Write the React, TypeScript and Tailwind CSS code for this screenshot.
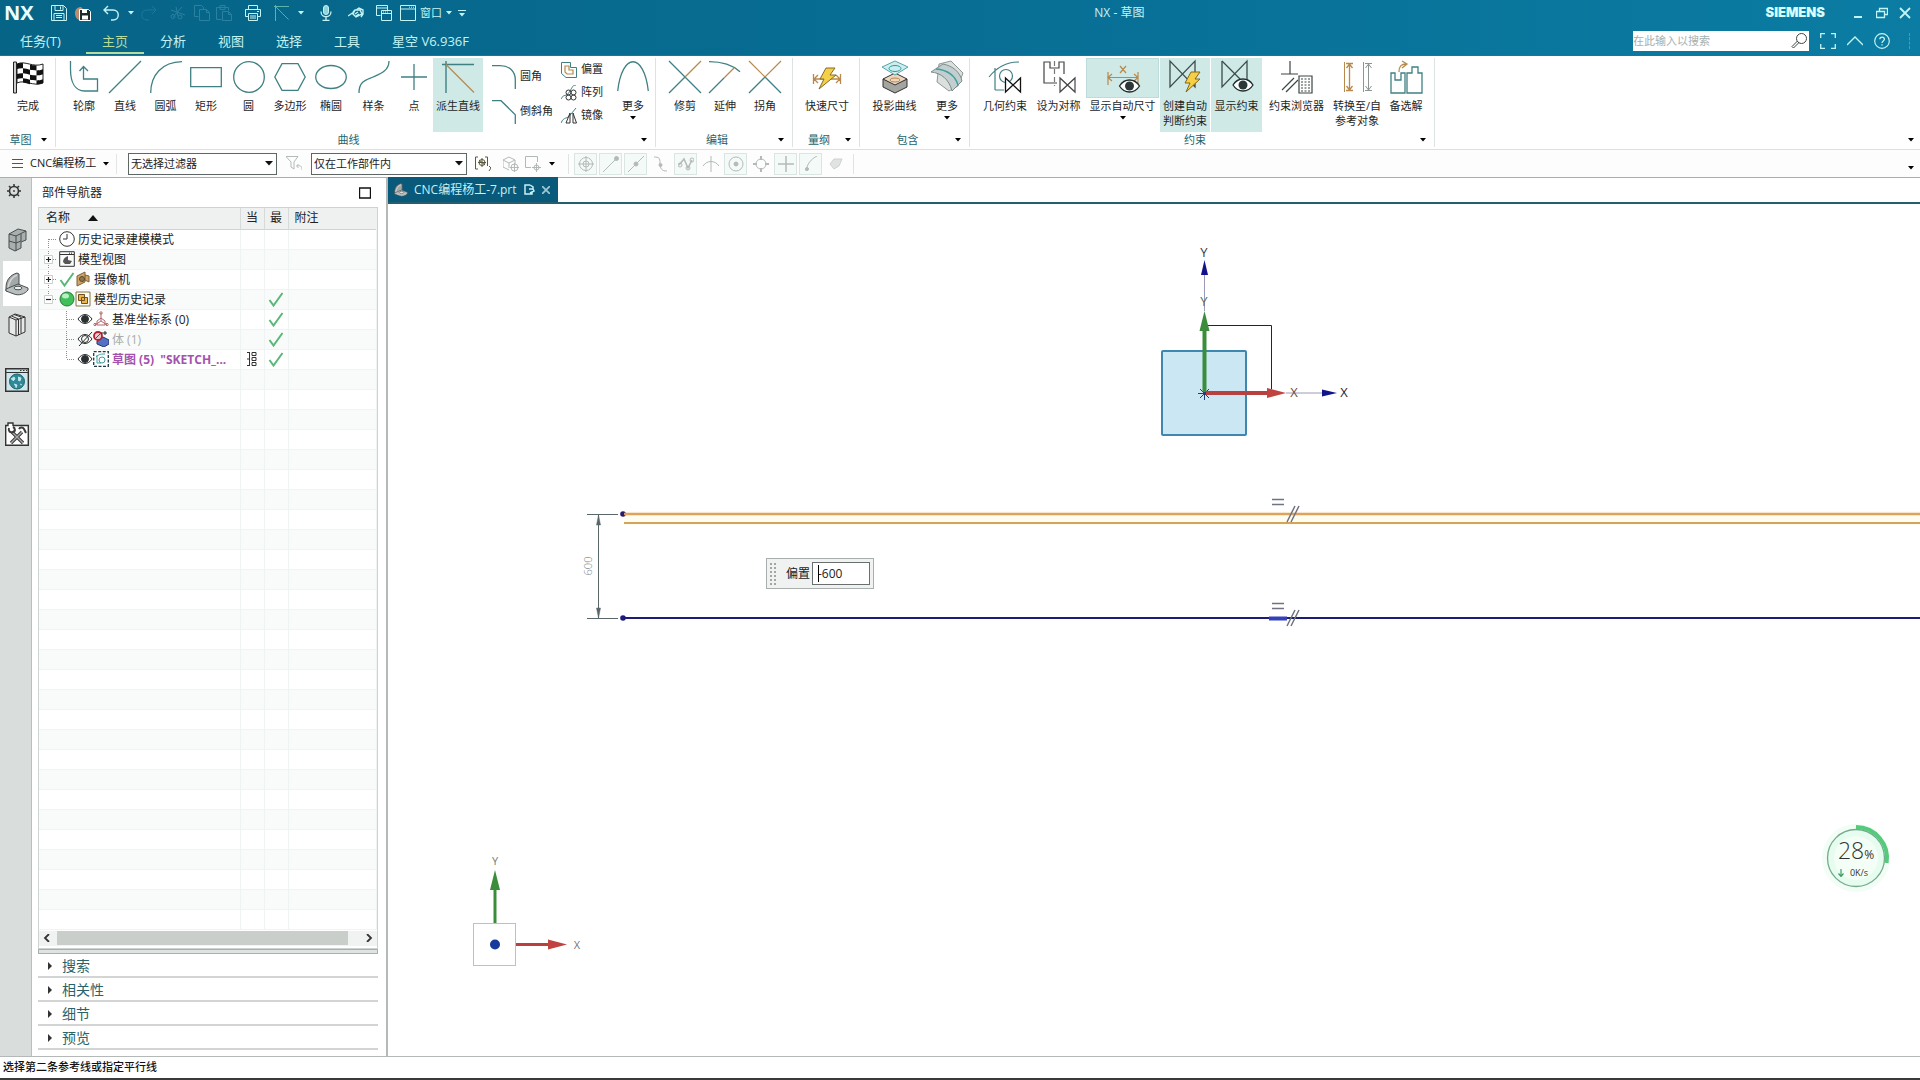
import React from 'react';

type IconProps = {
  children: React.ReactNode;
  className?: string;
  box?: string;
};

// Shared wrapper for every line icon in the app
function Icon({ children, className = 'w-4 h-4', box = '0 0 16 16' }: IconProps) {
  return (
    <svg
      viewBox={box}
      className={`shrink-0 ${className}`}
      fill="none"
      stroke="currentColor"
      strokeWidth="1"
      aria-hidden="true"
    >
      {children}
    </svg>
  );
}

function Caret({ className = 'text-black' }: { className?: string }) {
  return (
    <Icon box="0 0 6 4" className={`w-[6px] h-[4px] ${className}`}>
      <path d="M0 0h6L3 3.6z" fill="currentColor" stroke="none" />
    </Icon>
  );
}

/* ---------- Title bar ---------- */

function QuickButton({ label, className, children }: { label: string; className: string; children: React.ReactNode }) {
  return (
    <button type="button" aria-label={label} className={`flex h-6 items-center justify-center ${className}`}>
      {children}
    </button>
  );
}

function QuickAccess() {
  return (
    <div className="flex items-center text-[#c4f3f3]">
      <span className="w-[47px] pl-1 text-xl leading-6 font-bold text-[#e9ffff]">NX</span>
      <QuickButton label="保存" className="w-6">
        <Icon>
          <path d="M.5.5h12l3 3v12H.5zM4 .5v5h8v-5M9.5 1.5v3M3 15.5v-7h10v7M5 10.5h6M5 12.5h6" />
        </Icon>
      </QuickButton>
      <QuickButton label="全部保存" className="w-6">
        <Icon>
          <path d="M0 8c0-4 3-6 6-6l4 4-5 9c-3 0-5-3-5-7z" fill="#b98d72" stroke="none" />
          <path d="M4.5 4.5h9l2 2v9h-11z" fill="#202a2a" stroke="#fff" />
          <path d="M7 5h5v3H7zM7 10.500h6v4H7z" fill="#fff" stroke="none" />
        </Icon>
      </QuickButton>
      <QuickButton label="撤销" className="w-8">
        <Icon>
          <path d="M5 1 1 5l4 4M1 5h9c7 0 7 10 0 10H8" strokeWidth="1.4" />
        </Icon>
      </QuickButton>
      <QuickButton label="撤销列表" className="w-[7px]">
        <Caret className="text-[#c4f3f3]" />
      </QuickButton>
      <QuickButton label="重做" className="w-[30px] text-[#1f7899]">
        <Icon>
          <path d="m11 1 4 4-4 4M15 5H6c-7 0-7 10 0 10h2" />
        </Icon>
      </QuickButton>
      <QuickButton label="剪切" className="w-7 text-[#2c80a0]">
        <Icon>
          <path d="m1 5 14 5M3 12 12 2M6 2l2 9" />
          <circle cx="3" cy="11.5" r="2" />
          <circle cx="10" cy="12" r="2" />
        </Icon>
      </QuickButton>
      <QuickButton label="复制" className="w-5 text-[#2c80a0]">
        <Icon>
          <path d="M4.5 11.5h-4V.5h7l2 2v2M5.5 4.5h7l3 3v8h-10zM12.5 4.5v3h3" />
        </Icon>
      </QuickButton>
      <QuickButton label="粘贴" className="w-6 text-[#2c80a0]">
        <Icon>
          <path d="M5.5 14.5h-5v-12h12v3M4 .5h5v4H4zM6.5 6.5h6l3 3v6h-9zM12.5 6.5v3h3" />
        </Icon>
      </QuickButton>
      <QuickButton label="打印" className="w-[34px]">
        <Icon>
          <path d="M3.5 4.5v-4h9v4M3.5 11.5h-3v-7h15v7h-3M3.5 8.5h9v7h-9zM5 11h6M5 13h6M12 6.5h2" />
        </Icon>
      </QuickButton>
      <QuickButton label="派生直线" className="w-6 text-[#5cb3a8]">
        <Icon>
          <path d="M0 1.5h15M1.5 0v16" />
          <path d="m1.5 1.5 13 13" stroke="#8d9a78" />
        </Icon>
      </QuickButton>
      <QuickButton label="曲线列表" className="w-[14px]">
        <Caret className="text-[#c4f3f3]" />
      </QuickButton>
      <QuickButton label="语音" className="w-9">
        <Icon>
          <rect x="5.5" y=".5" width="5" height="9" rx="2.5" fill="#8ed3dc" />
          <path d="M3 6.5c0 7 10 7 10 0M8 12v3M4.5 15.5h7" strokeWidth="1.3" />
        </Icon>
      </QuickButton>
      <QuickButton label="触控模式" className="w-6">
        <Icon>
          <path d="m0 11 6-4-1 2 3 3 6-3-2-4H7L5 7M8 5l3-2 4 2v4l-2 3M7 9l3-2M8 11l3-2" strokeWidth="1.4" />
        </Icon>
      </QuickButton>
      <QuickButton label="切换窗口" className="w-8">
        <Icon>
          <path d="M4.5 10.5h-4V.5h11v5M.5 3h11M5.5 5.500h10v10h-10zM5.5 8.500h10" />
          <path d="M7 7h1M9 7h1M11 7h1" />
        </Icon>
      </QuickButton>
      <button type="button" className="flex h-6 items-center gap-1 text-[11px] leading-4">
        <Icon>
          <path d="M.5.5h15v15H.5zM.5 4h15M9 2.2h1M11 2.2h1M13 2.2h1" />
        </Icon>
        窗口
        <Caret className="text-[#c4f3f3]" />
      </button>
      <QuickButton label="工具条选项" className="w-5">
        <Icon box="0 0 8 8" className="w-2 h-2">
          <path d="M0 1.5h8" />
          <path d="M1 4h6L4 7.500z" fill="currentColor" stroke="none" />
        </Icon>
      </QuickButton>
    </div>
  );
}

const menus = ['分析', '视图', '选择', '工具'];

function TitleBar() {
  return (
    <header className="relative border-b border-[#3d6a74] bg-linear-to-r from-[#066487] via-[#086e94] to-[#0b7ca3] text-[#c4f3f3]">
      <div className="flex h-[26px] items-center justify-between">
        <QuickAccess />
        <div className="flex items-center pr-1">
          <span className="mr-[21px] font-['Inter'] text-[13px] font-black text-[#d8fbfb]">SIEMENS</span>
          <button type="button" aria-label="最小化" className="flex w-6 justify-center">
            <Icon className="w-3 h-3" box="0 0 12 12">
              <path d="M2 10h8" strokeWidth="2" />
            </Icon>
          </button>
          <button type="button" aria-label="还原" className="flex w-6 justify-center">
            <Icon className="w-3 h-3" box="0 0 12 12">
              <path d="M3.5 4V1.500h8v6H9M.5 4.500h8v6h-8z" strokeWidth="1.3" />
            </Icon>
          </button>
          <button type="button" aria-label="关闭" className="flex w-[22px] justify-center">
            <Icon className="w-3 h-3" box="0 0 12 12">
              <path d="m1 1 10 10M11 1 1 11" strokeWidth="1.8" />
            </Icon>
          </button>
        </div>
        <h1 className="absolute left-[58.3%] -translate-x-1/2 text-xs text-[#c4f3f3]">NX - 草图</h1>
      </div>
      <div className="flex h-[29px] items-center justify-between">
        <nav className="flex h-7 text-[13px] leading-7">
          <a href="#task" className="w-[86px] pl-5">任务(T)</a>
          <a href="#home" className="h-[27px] w-[58px] border-b-2 border-[#b8dc9c] text-center leading-7 text-[#b8dc9c]">
            主页
          </a>
          {menus.map((m) => (
            <a key={m} href={`#${m}`} className="w-[58px] text-center">
              {m}
            </a>
          ))}
          <a href="#xk" className="pl-4">星空 V6.936F</a>
        </nav>
        <div className="flex items-center gap-[11px] pr-2.5">
          <div className="flex h-5 w-[176px] items-center bg-white pr-0.5">
            <input
              aria-label="搜索"
              placeholder="在此输入以搜索"
              className="min-w-0 flex-1 text-[11px] leading-4 text-gray-700 outline-none placeholder:text-[#a5b0b0]"
            />
            <Icon className="w-4 h-4 text-[#3a4444]">
              <circle cx="10.5" cy="5.5" r="5" />
              <path d="M6.5 8 1 13.500 2.500 15 8 9.500" />
            </Icon>
          </div>
          <button type="button" aria-label="全屏">
            <Icon>
              <path d="M.7 5V.7H5M11 .7h4.300V5M15.300 11v4.300H11M5 15.300H.7V11" strokeWidth="1.3" />
            </Icon>
          </button>
          <button type="button" aria-label="折叠功能区">
            <Icon>
              <path d="m0 12 8-8 8 8" strokeWidth="1.3" />
            </Icon>
          </button>
          <button type="button" aria-label="帮助">
            <Icon>
              <circle cx="8" cy="8" r="7.3" strokeWidth="1.2" />
              <path d="M5.8 6.300c0-3 4.600-3 4.600 0C10.400 8 8 8 8 10M8 11.200v1.300" strokeWidth="1.3" />
            </Icon>
          </button>
          <span className="ml-2 h-4 border-l border-dashed border-[#3fa3c0]" />
        </div>
      </div>
    </header>
  );
}

/* ---------- Ribbon ---------- */

const teal = '#3f8083';
const tan = '#b8894c';

const bolt = 'M9 0h9l-5 7h5L4 20l4-9H3z';

function Eye() {
  return (
    <>
      <path d="M0 7C5-1 15-1 20 7c-5 8-15 8-20 0z" fill="#fff" stroke="#1f2a2a" strokeWidth="1.3" />
      <circle cx="10" cy="7" r="4.5" fill="#2c3838" stroke="none" />
    </>
  );
}

const art: Record<string, React.ReactNode> = {
  finish: (
    <>
      <path d="M1.5 1v31h3V1z" fill="#ccc" stroke="#222" />
      <path d="M5 3c8-4 16 4 26 0v19c-10 4-18-4-26 0z" fill="#fff" stroke="#222" />
      <path
        d="M5 3c2-1 4-1 6-.8v5c-2-.2-4 0-6 .8zM18 3.800c2 .3 4 .6 6.500.6v5c-2.500 0-4.500-.3-6.500-.6zM11 7.200c2 .2 4.500.8 7 1.600v5c-2.500-.8-5-1.400-7-1.600zM24.500 9.400c2 0 4.500-.4 6.500-1.200v5c-2 .8-4.500 1.200-6.500 1.200zM5 13c2-.8 4-1 6-.8v5c-2-.2-4 0-6 .8zM18 13.800c2 .3 4 .6 6.500.6v5c-2.500 0-4.500-.3-6.500-.6zM11 17.200c2 .2 4.500.8 7 1.600v4.500c-2.500-.8-5-1.400-7-1.800zM24.500 19.400c2 0 4.500-.4 6.500-1.200V22c-2 .8-4.500 1.200-6.500 1.400z"
        fill="#111"
        stroke="none"
      />
    </>
  ),
  profile: (
    <g stroke={teal} strokeWidth="1.3">
      <path d="M2.5 0v8c0 14 5 22 14 22h13V18h-14V6M11.500 10l4-4.500 4.500 4.500" />
    </g>
  ),
  line: <path d="M0 32 32 0" stroke={teal} strokeWidth="1.3" />,
  arc: <path d="M.7 32C.7 14 12 1 32 .7" stroke={teal} strokeWidth="1.3" />,
  rect: <path d="M.7 6.700h30.600v19H.7z" stroke={teal} strokeWidth="1.3" />,
  circle: <circle cx="16" cy="16" r="15.3" stroke={teal} strokeWidth="1.3" />,
  polygon: <path d="M.8 16 8 2.700h16L31.200 16 24 29.300H8z" stroke={teal} strokeWidth="1.3" />,
  ellipse: <ellipse cx="16" cy="16" rx="15.3" ry="11.5" stroke={teal} strokeWidth="1.3" />,
  spline: <path d="M1 32c0-12 7-13 14-16S31 10 31 0" stroke={teal} strokeWidth="1.3" />,
  point: <path d="M16 3v26M3 16h26" stroke={teal} strokeWidth="1.3" />,
  derived: (
    <>
      <path d="M0 3.500h32M4 0v32" stroke={teal} strokeWidth="1.4" />
      <path d="m4 3.500 28 28" stroke={tan} strokeWidth="1.2" />
    </>
  ),
  more: <path d="M.7 30C5-9 27-9 31.300 30" stroke={teal} strokeWidth="1.3" />,
  trim: (
    <>
      <path d="m0 0 32 32M0 32l16-16" stroke={teal} strokeWidth="1.3" />
      <path d="M16 16 32 0" stroke={tan} strokeWidth="1.2" />
    </>
  ),
  extend: (
    <>
      <path d="M0 .7c12 0 22 2 31 10M0 32l15-15" stroke={teal} strokeWidth="1.3" />
      <path d="M15 17 25 7" stroke={tan} strokeWidth="1.2" />
    </>
  ),
  corner: (
    <>
      <path d="m0 32 16-16 16 16" stroke={teal} strokeWidth="1.3" />
      <path d="m0 0 16 16L32 0" stroke={tan} strokeWidth="1.2" />
    </>
  ),
  rapid: (
    <>
      <path d="M2.5 13v10M29.500 13v10M3 18h26M7 14l-4 4 4 4M25 14l4 4-4 4" stroke={tan} strokeWidth="1.3" />
      <path d="M15 7h9l-5 7h6L8 28l5-10H9z" fill="#f3cf4a" stroke="#8a6a20" />
    </>
  ),
  project: (
    <>
      <path d="M4 18v8l12 6 12-6v-8l-12 5z" fill="#a3a5a0" stroke="#333" />
      <path d="M4 18 16 12l12 6-12 6z" fill="#ecd6c0" stroke="#333" />
      <path d="M3 6 16 0l13 6-13 8z" fill="#cdeeee" stroke="#5aa5ab" />
      <ellipse cx="16" cy="7.5" rx="6" ry="3" stroke="#2d9aa5" />
      <ellipse cx="16" cy="19" rx="5" ry="2" stroke={tan} />
    </>
  ),
  moreSurf: (
    <>
      <path d="M8 3 20 0l12 12-5 13-9 5-12-9z" fill="#dbe0df" stroke="#8d9896" />
      <path d="M0 11 12 3c10 2 17 8 19 17l-10 10C18 18 10 12 0 11z" fill="#c3cfce" stroke="#7e8b8a" />
      <path d="M5 8c11 1 19 6 22 16" stroke="#3f9da0" strokeWidth="1.5" />
    </>
  ),
  geom: (
    <>
      <path d="M6 29V7M6 29h9M0 16C8 6 18 1 30 1" stroke={teal} strokeWidth="1.2" />
      <circle cx="17" cy="15" r="6.5" stroke={teal} strokeWidth="1.2" />
      <g transform="translate(16.5 17)">
        <path d="M0 0v14L15 0v14z" fill="#fff" stroke="#111" strokeWidth="1.3" />
      </g>
    </>
  ),
  symmetric: (
    <g stroke="#444" strokeWidth="1.2">
      <path d="M14 22H1V1h6v6h5M21 13V1h-5v6h-4" />
      <path d="M11.500 0v25" strokeDasharray="5 3" stroke="#777" />
      <path d="M17 17v14l15-14v14z" fill="#fff" />
    </g>
  ),
  autoDim: (
    <>
      <path d="M1 11v13M31 11v13M1 16.500h30M5 13l-4 3.500L5 20M27 13l4 3.500-4 3.500M13 5l6 7M19 5l-6 7" stroke={tan} strokeWidth="1.2" />
      <g transform="translate(12.5 18)">
        <Eye />
      </g>
    </>
  ),
  infer: (
    <>
      <path d="M1 0v26L26 0v26z" stroke="#3d4c4c" strokeWidth="1.3" />
      <g transform="translate(13 11)">
        <path d={bolt} fill="#f6cf45" stroke="#84661c" />
      </g>
    </>
  ),
  showCons: (
    <>
      <path d="M1 0v26L26 0v20" stroke="#3d4c4c" strokeWidth="1.3" />
      <path d="m1 0 20 20" stroke="#3d4c4c" strokeWidth="1.3" />
      <g transform="translate(12 17)">
        <Eye />
      </g>
    </>
  ),
  browser: (
    <g stroke="#3c4444" strokeWidth="1.2">
      <path d="M0 13h17M9 0v13M1 29l12-12M5 31l12-12" />
      <path d="M18 15h13v17H18z" fill="#fff" />
      <path d="M20 18h9M20 21h9M20 24h9M20 27h9M20 30h9" strokeDasharray="2 1.5" />
    </g>
  ),
  convert: (
    <>
      <path d="M3.5 1v30" stroke={tan} />
      <path d="M5 2.500h7M5 29.500h7M8.500 3v26M5.500 7l3-4 3 4M5.500 25l3 4 3-4" stroke={tan} strokeWidth="1.3" />
      <path d="M22.500 1v30M24 2.500h7M24 29.500h7M27.500 3v26M24.500 7l3-4 3 4M24.500 25l3 4 3-4" stroke="#8c9494" />
    </>
  ),
  alternate: (
    <>
      <path d="M1 32V12h4v7h6v-7h4v20zM17 32V12h5V6h6v6h4v20z" stroke={teal} strokeWidth="1.3" />
      <path d="M9 11c0-6 2-8 7-8M12 0l5 3-5 4" stroke={tan} strokeWidth="1.3" />
    </>
  ),
};

type ToolProps = {
  icon: string;
  label: string;
  width: string;
  second?: string;
  active?: boolean;
  menu?: boolean;
};

function Tool({ icon, label, width, second, active, menu }: ToolProps) {
  return (
    <button
      type="button"
      className={`flex h-[74px] flex-col items-center pt-[3px] ${width} ${active ? 'bg-[#cfe9e7]' : ''}`}
    >
      <Icon box="0 0 32 32" className="w-8 h-8 overflow-visible">
        {art[icon]}
      </Icon>
      <span className="mt-[5px] text-[11px] leading-[15px] whitespace-nowrap">{label}</span>
      {second && <span className="text-[11px] leading-[15px] whitespace-nowrap">{second}</span>}
      {menu && (
        <span className="mt-[3px]">
          <Caret />
        </span>
      )}
    </button>
  );
}

// Dimension button is split: only its upper half is pressed
function SplitTool({ icon, label }: { icon: string; label: string }) {
  return (
    <button type="button" className="flex h-[74px] w-[73px] flex-col items-center">
      <span className="flex h-10 w-full justify-center border border-[#bcdcdc] bg-[#cfe9e7] pt-0.5">
        <Icon box="0 0 32 32" className="w-8 h-8 overflow-visible">
          {art[icon]}
        </Icon>
      </span>
      <span className="text-[11px] leading-[15px] whitespace-nowrap">{label}</span>
      <span className="mt-[3px]">
        <Caret />
      </span>
    </button>
  );
}

function SmallTool({ label, children, big }: { label: string; children: React.ReactNode; big?: boolean }) {
  return (
    <button type="button" className={`flex items-center gap-1 text-[11px] whitespace-nowrap ${big ? 'h-[35px]' : 'h-[23px]'}`}>
      {children}
      {label}
    </button>
  );
}

type GroupProps = { name: string; className: string; inset?: string; children: React.ReactNode };

function Group({ name, className, inset = '', children }: GroupProps) {
  return (
    <section className={`flex shrink-0 flex-col border-r border-[#dbe3e3] ${className}`}>
      <div className={`flex h-[75px] items-start ${inset}`}>{children}</div>
      <div className="flex h-[14px] items-center pr-2 text-[11px] leading-[14px] text-[#25646c]">
        <span className="flex-1 text-center">{name}</span>
        <button type="button" aria-label={`${name}选项`} className="flex h-3 items-center">
          <Caret />
        </button>
      </div>
    </section>
  );
}

function Ribbon() {
  return (
    <div className="flex h-[94px] items-end justify-between overflow-hidden border-b border-[#dde0e0] bg-white pb-0.5 text-[#1d2626]">
      <div className="flex">
        <Group name="草图" className="w-14" inset="pl-px">
          <Tool icon="finish" label="完成" width="w-14" />
        </Group>
        <Group name="曲线" className="w-[600px]" inset="pl-2">
          <Tool icon="profile" label="轮廓" width="w-10" />
          <Tool icon="line" label="直线" width="w-[42px]" />
          <Tool icon="arc" label="圆弧" width="w-[39px]" />
          <Tool icon="rect" label="矩形" width="w-[42px]" />
          <Tool icon="circle" label="圆" width="w-[43px]" />
          <Tool icon="polygon" label="多边形" width="w-10" />
          <Tool icon="ellipse" label="椭圆" width="w-[42px]" />
          <Tool icon="spline" label="样条" width="w-[43px]" />
          <Tool icon="point" label="点" width="w-[38px]" />
          <Tool icon="derived" label="派生直线" width="w-[50px]" active />
          <div className="ml-px flex w-[77px] flex-col pt-px pl-2">
            <SmallTool label="圆角" big>
              <Icon box="0 0 24 24" className="w-6 h-6">
                <path d="M0 .7h8c10 0 15.300 6 15.300 14V24" stroke={teal} strokeWidth="1.3" />
              </Icon>
            </SmallTool>
            <SmallTool label="倒斜角" big>
              <Icon box="0 0 24 24" className="w-6 h-6">
                <path d="M0 .7h9l14.300 14V24" stroke={teal} strokeWidth="1.3" />
              </Icon>
            </SmallTool>
          </div>
          <div className="flex w-[52px] flex-col">
            <SmallTool label="偏置">
              <Icon>
                <path d="M.5.500h9v5h6v10H5l-4.500-4z" stroke={teal} />
                <path d="M4 4h4v4h4v4H6L4 10z" stroke={tan} strokeWidth="1.2" />
              </Icon>
            </SmallTool>
            <SmallTool label="阵列">
              <Icon>
                <path d="M0 14C3 8 5 13 9 6s3-5 6-6" stroke={teal} />
                <g stroke="#333">
                  <circle cx="7.5" cy="7.5" r="2.5" />
                  <circle cx="12.5" cy="7.5" r="2.5" />
                  <circle cx="7.5" cy="12.5" r="2.5" />
                  <circle cx="12.5" cy="12.5" r="2.5" />
                </g>
              </Icon>
            </SmallTool>
            <SmallTool label="镜像">
              <Icon>
                <path d="M0 15C3 8 6 12 10 6l5-6" stroke={teal} />
                <path d="M9 5v10H5zM12 5l3.500 10H12z" stroke="#333" />
              </Icon>
            </SmallTool>
          </div>
          <Tool icon="more" label="更多" width="w-10" menu />
        </Group>
        <Group name="编辑" className="w-[137px]" inset="pl-[9px]">
          <Tool icon="trim" label="修剪" width="w-10" />
          <Tool icon="extend" label="延伸" width="w-10" />
          <Tool icon="corner" label="拐角" width="w-10" />
        </Group>
        <Group name="量纲" className="w-[67px]" inset="pl-0.5">
          <Tool icon="rapid" label="快速尺寸" width="w-[66px]" />
        </Group>
        <Group name="包含" className="w-[110px]">
          <Tool icon="project" label="投影曲线" width="w-[69px]" />
          <Tool icon="moreSurf" label="更多" width="w-9" menu />
        </Group>
        <Group name="约束" className="w-[465px]" inset="pl-2">
          <Tool icon="geom" label="几何约束" width="w-[54px]" />
          <Tool icon="symmetric" label="设为对称" width="w-[53px]" />
          <span className="w-px" />
          <SplitTool icon="autoDim" label="显示自动尺寸" />
          <span className="w-px" />
          <Tool icon="infer" label="创建自动" second="判断约束" width="w-[50px]" active />
          <span className="w-px" />
          <Tool icon="showCons" label="显示约束" width="w-[51px]" active />
          <Tool icon="browser" label="约束浏览器" width="w-[69px]" />
          <Tool icon="convert" label="转换至/自" second="参考对象" width="w-[52px]" />
          <Tool icon="alternate" label="备选解" width="w-[46px]" />
        </Group>
      </div>
      <button type="button" aria-label="功能区选项" className="flex h-[14px] items-center pr-1.5">
        <Caret />
      </button>
    </div>
  );
}

/* ---------- Selection bar ---------- */

function FilterSelect({ value, label, className }: { value: string; label: string; className: string }) {
  return (
    <div className={`relative ${className}`}>
      <select
        aria-label={label}
        className="h-[22px] w-full appearance-none border border-[#5f6666] bg-white pl-0.5 text-[11px] leading-5 text-[#222]"
      >
        <option>{value}</option>
      </select>
      <span className="pointer-events-none absolute inset-y-0 right-1 flex items-center">
        <Icon box="0 0 8 5" className="w-2 h-[5px]">
          <path d="M0 0h8L4 4.500z" fill="#111" stroke="none" />
        </Icon>
      </span>
    </div>
  );
}

const snaps: { name: string; on: boolean; d: React.ReactNode }[] = [
  {
    name: '启用捕捉点',
    on: true,
    d: (
      <>
        <circle cx="8" cy="8" r="6.5" />
        <circle cx="8" cy="8" r="3" />
        <path d="M8 0v16M0 8h16" />
      </>
    ),
  },
  { name: '端点', on: true, d: <><path d="M0 16 14 2" /><circle cx="13.5" cy="2.5" r="2" fill="currentColor" /></> },
  { name: '中点', on: true, d: <><path d="M0 16 16 0" /><circle cx="8" cy="8" r="2" fill="currentColor" /></> },
  { name: '控制点', on: false, d: <><path d="M1 1c5 0 6 1 6 6 0 6 2 8 7 8" /><circle cx="7.5" cy="9" r="1.5" fill="currentColor" /></> },
  { name: '极点', on: true, d: <><path d="m1 9 5-6 4 9 4-8" strokeWidth="1.5" /><circle cx="2" cy="9" r="2" /><circle cx="10" cy="12" r="2" /><circle cx="14" cy="4" r="2" /></> },
  { name: '交点', on: false, d: <path d="M8 0v16M0 10c4-6 12-6 16 0" /> },
  { name: '圆弧中心', on: true, d: <><circle cx="8" cy="8" r="7" /><circle cx="8" cy="8" r="2" fill="currentColor" /></> },
  { name: '象限点', on: false, d: <><circle cx="8" cy="8" r="5" /><path d="M8 0v4M8 12v4M0 8h4M12 8h4" strokeWidth="2" /></> },
  { name: '现有点', on: true, d: <path d="M8 0v16M0 8h16" strokeWidth="1.5" /> },
  { name: '曲线上的点', on: true, d: <><path d="M3 15C4 8 8 3 14 0" /><circle cx="4" cy="13" r="1.5" fill="currentColor" /></> },
  { name: '面上的点', on: false, d: <path d="m2 8 4-5h8l-3 7-5 3z" fill="#e0e3e2" stroke="#cdd2d0" /> },
];

function SelectionBar() {
  return (
    <div className="flex h-7 items-center border-b border-[#a8adad] bg-[#fcfdfc] text-[11px] text-[#222] whitespace-nowrap">
      <button type="button" className="flex w-[116px] shrink-0 items-center gap-[7px] pl-3">
        <Icon className="w-[11px] h-[11px] text-[#555]" box="0 0 11 11">
          <path d="M0 1.500h11M0 5.500h11M0 9.500h11" />
        </Icon>
        <span>CNC编程杨工</span>
        <Caret />
      </button>
      <span className="h-5 w-3 border-l border-[#e2e6e6]" />
      <FilterSelect label="选择过滤器" value="无选择过滤器" className="w-[149px]" />
      <button type="button" aria-label="重置过滤器" className="flex w-[34px] justify-center text-[#b4bab8]">
        <Icon>
          <path d="M0 .5h12L8 6v7l-3-2V6zM16 14c0-4-2-5-5-4M12.500 8 10.500 10l2 2" />
        </Icon>
      </button>
      <FilterSelect label="选择范围" value="仅在工作部件内" className="w-[156px]" />
      <button type="button" aria-label="常规选择" className="flex w-8 justify-center text-[#5a5a3c]">
        <Icon>
          <path d="M3 1H.5v12H3M10 1h2.500v9M14 10l2 2-2 3M4 4l6 5M7 2v9M3 6.500h8" />
          <circle cx="7" cy="6.5" r="3" />
        </Icon>
      </button>
      <button type="button" aria-label="体选择" className="flex w-6 justify-center text-[#b4bab8]">
        <Icon>
          <path d="M0 4l6-3 6 3v5M0 4v7l6 3M0 4l6 3 6-3M6 7v5" />
          <circle cx="11.5" cy="11.5" r="3.5" />
          <path d="M11.500 7v9M7 11.500h9" />
        </Icon>
      </button>
      <button type="button" aria-label="矩形选择" className="ml-0.5 flex w-[43px] items-center gap-2 text-[#b2b8b6]">
        <Icon>
          <path d="M6 11.500H.5V.5h12V6" />
          <circle cx="11.5" cy="11.5" r="2.5" />
          <path d="M11.500 7v9M7 11.500h9" />
        </Icon>
        <Caret />
      </button>
      <div className="flex h-5 items-center gap-0.5 border-x border-[#dfe4e2] pr-1.5 pl-[5px] text-[#b3bab7]">
        {snaps.map((s) => (
          <button
            key={s.name}
            type="button"
            aria-label={s.name}
            className={
              s.on
                ? 'flex h-[22px] w-[23px] items-center justify-center border border-[#dbe6e2] bg-[#f4faf8]'
                : 'flex h-[22px] w-[23px] items-center justify-center'
            }
          >
            <Icon>{s.d}</Icon>
          </button>
        ))}
      </div>
      <button type="button" aria-label="选择条选项" className="ml-auto pt-2 pr-1.5">
        <Caret />
      </button>
    </div>
  );
}

/* ---------- Resource bar ---------- */

function Bracket({ className }: { className: string }) {
  return (
    <Icon box="0 0 24 24" className={className}>
      <path d="M1 16C1 8 5 3 12 1l2 1v10L5 18l-4 1z" fill="#a3a9a8" stroke="#4a5050" />
      <path d="M3 16C4 9 7 5 12 3" stroke="#d4d8d7" strokeWidth="1.5" />
      <path d="M1 17 13 12l10 4v2c-3 4-9 6-14 4l-8-3z" fill="#b9bfbe" stroke="#4a5050" />
      <ellipse cx="13" cy="16" rx="4" ry="1.8" fill="#eef0f0" stroke="#4a5050" />
    </Icon>
  );
}

function ResourceBar() {
  return (
    <nav aria-label="资源条" className="flex w-8 shrink-0 flex-col items-center border-r border-[#b9c1bc] bg-[#d9dddc] pl-[3px] text-[#333]">
      <button type="button" aria-label="资源条选项" className="mr-1.5 flex h-[26px] items-center">
        <Icon className="w-[14px] h-[14px]" box="0 0 14 14">
          <circle cx="7" cy="7" r="4.5" strokeWidth="1.6" />
          <path d="M7 0v3M7 11v3M0 7h3M11 7h3M2 2l2 2M10 10l2 2M12 2l-2 2M4 10l-2 2" strokeWidth="1.5" />
          <circle cx="7" cy="7" r=".5" fill="currentColor" />
        </Icon>
      </button>
      <button type="button" aria-label="装配导航器" className="mt-[15px] flex h-[42px] items-center">
        <Icon box="0 0 20 24" className="w-5 h-6">
          <path d="m2 6 9-5 8 2v9l-5 2v6l-6 3-6-3z" fill="#a9afae" stroke="#474d4d" />
          <path d="m2 6 7 2 10-5M9 8v15M2 13l7 2 5-2V6" stroke="#474d4d" />
        </Icon>
      </button>
      <button type="button" aria-label="部件导航器" className="flex h-[45px] w-full items-center justify-center bg-white">
        <Bracket className="w-6 h-6" />
      </button>
      <button type="button" aria-label="重用库" className="flex h-[38px] items-center">
        <Icon box="0 0 20 24" className="w-5 h-6">
          <path d="m2 4 6-3 10 3v15l-9 4-7-3z" fill="#e6e9e8" />
          <path d="m2 4 7 3v16M9 7l9-3M4.500 3l7 3v16M7 1.500 14 4v16" />
        </Icon>
      </button>
      <button type="button" aria-label="网页浏览器" className="mt-6 flex h-6 items-center">
        <Icon box="0 0 24 24" className="w-6 h-6">
          <path d="M.7.700h22.600v22.600H.7z" fill="#cfe6ea" strokeWidth="1.4" />
          <path d="M1 4.500h22M15 2.500h1.500M18 2.500h1.500M21 2.500h1" />
          <circle cx="12" cy="13.5" r="7.5" fill="#2f8a98" stroke="#1f6470" />
          <path d="m6 11 3-2 1 2-2 2M13 9l3 1-1 3-2-1M9 16l3 1-1 3M15 16l2 1" fill="#bfe6ea" stroke="#bfe6ea" />
        </Icon>
      </button>
      <button type="button" aria-label="加工向导" className="mt-[30px] flex h-6 items-center">
        <Icon box="0 0 24 24" className="w-6 h-6">
          <path d="M.7 23.300V3.500H3V1h5v2.500h15.300v19.800z" fill="#fff" strokeWidth="1.4" />
          <path d="m7 10 11 11M17 10 6 21" stroke="#3c3c3c" strokeWidth="3.4" />
          <path d="m7 10 11 11M17 10 6 21" stroke="#aaa" strokeWidth="1.4" />
          <path d="M4 6c-1 3 1 5 4 4s2-4 0-5M14 7c1-2 4-2 5 0l2 4" stroke="#3c3c3c" strokeWidth="2" />
        </Icon>
      </button>
    </nav>
  );
}

/* ---------- Part navigator ---------- */

function Tick() {
  return (
    <Icon className="w-4 h-4 text-[#58b877]">
      <path d="m1.500 9 4 5.500L14.500 2" strokeWidth="2" />
    </Icon>
  );
}

function SmallEye({ off }: { off?: boolean }) {
  return (
    <Icon className="w-4 h-4 text-[#2c3030]">
      <path d="M1 8c4-6 10-6 14 0-4 6-10 6-14 0z" />
      <circle cx="8" cy="8" r="3.5" fill={off ? 'none' : '#2c3030'} />
      {off && <path d="M2 15 15 1" />}
    </Icon>
  );
}

const rowArt: Record<string, React.ReactNode> = {
  clock: (
    <Icon className="w-4 h-4 text-[#333]">
      <circle cx="8" cy="8" r="7.3" />
      <path d="M8 3v5H4" />
    </Icon>
  ),
  view: (
    <Icon className="w-4 h-4 text-[#333]">
      <path d="M.7.700h14.600v14.600H.7zM1 3.500h14M10 2.200h1M12 2.200h1" />
      <path d="M4 11c0-3 2-5 5-6v4l4 1-2 3H6z" fill="#555" stroke="none" />
    </Icon>
  ),
  camera: (
    <Icon className="w-4 h-4">
      <path d="m2 5 8-4v10l-8 4zM10 4l4 1v6l-4-2" fill="#cfa568" stroke="#7d6236" />
      <circle cx="7" cy="8" r="2.5" fill="#8e7a50" stroke="#5d4a28" />
    </Icon>
  ),
  ball: (
    <Icon className="w-4 h-4">
      <circle cx="8" cy="8" r="7" fill="#3fc05a" stroke="#2c7a3c" />
      <ellipse cx="6.5" cy="5" rx="3.5" ry="2.5" fill="#b7f0c2" stroke="none" />
    </Icon>
  ),
  history: (
    <Icon className="w-4 h-4">
      <path d="M1 1h14v14H1z" stroke="#8a7442" />
      <path d="M3.500 3.500h6v6h-6zM6.500 6.500h6v6h-6z" fill="#f0b64c" stroke="#6b5020" />
    </Icon>
  ),
  csys: (
    <Icon className="w-4 h-4 text-[#b3686c]">
      <path d="M8 2v8M8 10l-6 4M8 10l6 4M4 10l4-3 4 3v4H4z" />
      <circle cx="8" cy="2" r="1.2" />
      <circle cx="2" cy="13.5" r="1.2" />
      <circle cx="14" cy="13.5" r="1.2" />
    </Icon>
  ),
  body: (
    <Icon className="w-4 h-4">
      <path d="m4 10 6-4 6 3v4l-5 3-7-3z" fill="#5470c4" stroke="#26356e" />
      <circle cx="5" cy="5" r="4" fill="#e9c9cd" stroke="#b5202e" strokeWidth="1.8" />
      <path d="m2.500 7.500 5-5" stroke="#b5202e" />
      <path d="M8 2h6M12 0v4" stroke="#222" />
    </Icon>
  ),
  sketch: (
    <Icon className="w-4 h-4">
      <path d="M.7.700h14.600v14.600H.7z" stroke="#1d3b44" strokeDasharray="3 1.5" strokeWidth="1.3" />
      <path d="M4 12V4M3 6c3-3 6-3 9-3M4 12h4" stroke="#3f9da0" />
      <circle cx="9" cy="9" r="3" stroke="#3f9da0" />
    </Icon>
  ),
  tick: <Tick />,
  eye: <SmallEye />,
  eyeOff: <SmallEye off />,
};

type TreeRow = {
  label: string;
  icons: string[];
  expand?: '+' | '-';
  child?: boolean;
  state?: 'first' | 'last';
  tone?: string;
  current?: boolean;
  latest?: boolean;
};

const tree: TreeRow[] = [
  { label: '历史记录建模模式', icons: ['clock'], state: 'first' },
  { label: '模型视图', icons: ['view'], expand: '+' },
  { label: '摄像机', icons: ['tick', 'camera'], expand: '+' },
  { label: '模型历史记录', icons: ['ball', 'history'], expand: '-', state: 'last', latest: true },
  { label: '基准坐标系 (0)', icons: ['eye', 'csys'], child: true, latest: true },
  { label: '体 (1)', icons: ['eyeOff', 'body'], child: true, tone: 'text-[#a9adad]', latest: true },
  {
    label: '草图 (5)  "SKETCH_...',
    icons: ['eye', 'sketch'],
    child: true,
    state: 'last',
    tone: 'font-bold text-[#a552ad]',
    current: true,
    latest: true,
  },
];

const blankRows = Array.from({ length: 28 }, (_, i) => i);

function Branch({ row }: { row: TreeRow }) {
  const top = row.state === 'first' ? 10 : 0;
  const bottom = row.state === 'last' ? 10 : 20;
  return (
    <Icon box="0 0 20 20" className={`w-5 h-5 text-[#8a9090] ${row.child ? 'ml-[18px]' : ''}`}>
      <path d={`M9.500 ${top}V${bottom}M10 10.500h8`} strokeDasharray="1 1" />
      {row.expand && (
        <>
          <path d="M5.500 6.500h8v8h-8z" fill="#fff" stroke="#c9cfcc" />
          <path d={row.expand === '+' ? 'M7 10.500h5M9.500 8v5' : 'M7 10.500h5'} stroke="#222" strokeWidth="1.2" />
        </>
      )}
    </Icon>
  );
}

const sections = ['搜索', '相关性', '细节', '预览'];

function PartNavigator() {
  return (
    <aside className="flex w-[356px] shrink-0 flex-col border-r-2 border-[#b4b9b7] bg-white pr-2 pl-1.5 text-xs text-[#222]">
      <div className="flex h-[29px] items-center justify-between pr-[7px] pl-1">
        <h2>部件导航器</h2>
        <button type="button" aria-label="固定">
          <Icon className="w-3 h-3" box="0 0 12 12">
            <path d="M.5 1h11v10H.5z" strokeWidth="1.4" stroke="#111" />
          </Icon>
        </button>
      </div>
      <div className="flex flex-1 flex-col border border-[#cdd3d0]">
        <table className="w-full table-fixed border-collapse">
          <colgroup>
            <col className="w-[201px]" />
            <col className="w-6" />
            <col className="w-6" />
            <col />
          </colgroup>
          <thead>
            <tr className="h-[21px] border-b border-[#cfd4d2] bg-[#eff1f0] text-left [&>th]:p-0 [&>th]:leading-5 [&>th]:font-normal">
              <th className="border-r border-[#d6dbd9]">
                <span className="flex items-center gap-[18px] pl-[7px]">
                  名称
                  <Icon box="0 0 10 6" className="w-2.5 h-1.5">
                    <path d="M0 6 5 0l5 6z" fill="#111" stroke="none" />
                  </Icon>
                </span>
              </th>
              <th className="border-r border-[#d6dbd9]">
                <span className="flex justify-center">当</span>
              </th>
              <th className="border-r border-[#d6dbd9]">
                <span className="flex justify-center">最</span>
              </th>
              <th>
                <span className="pl-1.5">附注</span>
              </th>
            </tr>
          </thead>
          <tbody>
            {tree.map((row) => (
              <tr key={row.label} className="h-5 border-b border-[#f0f4f2] even:bg-[#f8fbf9] [&>td]:border-r [&>td]:border-[#eff3f1] [&>td]:p-0">
                <td>
                  <span className="flex h-[19px] items-center overflow-hidden whitespace-pre">
                    <Branch row={row} />
                    {row.icons.map((name) => (
                      <React.Fragment key={name}>{rowArt[name]}</React.Fragment>
                    ))}
                    <span className={`pl-[3px] leading-[19px] ${row.tone ?? ''}`}>{row.label}</span>
                  </span>
                </td>
                <td>
                  {row.current && (
                    <span className="flex justify-center">
                      <Icon className="w-4 h-4 text-[#333]">
                        <path d="M5.500 1v14M3 1.500h3M3 8h3M3 14.500h3M8 1.500h4v3H8zM8 6.500h4v3H8zM8 11.500h4v3H8z" />
                      </Icon>
                    </span>
                  )}
                </td>
                <td>
                  {row.latest && (
                    <span className="flex justify-center">
                      <Tick />
                    </span>
                  )}
                </td>
                <td />
              </tr>
            ))}
            {blankRows.map((i) => (
              <tr key={i} className="h-5 border-b border-[#f0f4f2] odd:bg-white even:bg-[#f8fbf9] [&>td]:border-r [&>td]:border-[#eff3f1]">
                <td />
                <td />
                <td />
                <td />
              </tr>
            ))}
          </tbody>
        </table>
        <div className="mt-px flex h-[15px] items-center justify-between bg-[#f1f3f2] px-1 text-[#333]">
          <button type="button" aria-label="向左滚动">
            <Icon box="0 0 8 8" className="w-2 h-2">
              <path d="M6 0 2 4l4 4" strokeWidth="1.8" />
            </Icon>
          </button>
          <span className="mr-[17px] ml-1.5 h-[14px] flex-1 bg-[#caceca]" />
          <button type="button" aria-label="向右滚动">
            <Icon box="0 0 8 8" className="w-2 h-2">
              <path d="m2 0 4 4-4 4" strokeWidth="1.8" />
            </Icon>
          </button>
        </div>
      </div>
      <div className="h-[5px] border border-[#a9b0ac] bg-[#dfe3e1]" />
      {sections.map((s) => (
        <button
          key={s}
          type="button"
          className="flex h-6 items-center gap-2.5 border-b-2 border-[#d2d5d4] pt-0.5 pl-2.5 text-sm leading-5 text-[#2a6268]"
        >
          <Icon box="0 0 4 8" className="w-1 h-2">
            <path d="m0 0 4 4-4 4z" fill="#333" stroke="none" />
          </Icon>
          {s}
        </button>
      ))}
      <div className="h-1.5" />
    </aside>
  );
}

/* ---------- Graphics window ---------- */

function SketchCurves() {
  return (
    <svg className="absolute inset-0 h-full w-full" fill="none" aria-hidden="true">
      {/* offset preview pair */}
      <rect x="236" y="307" width="100%" height="14" fill="#fffdf0" />
      <circle cx="235" cy="310" r="2.8" fill="#2a1a70" />
      <path d="M236 310h4000" stroke="#dda35c" strokeWidth="2.5" />
      <path d="M236 319h4000" stroke="#d4a35c" strokeWidth="2" />
      <path d="M235 414h4000" stroke="#1c1c74" strokeWidth="2" />
      <circle cx="235" cy="414" r="2.8" fill="#1c1c80" />

      {/* dimension */}
      <g stroke="#59666a">
        <path d="M199 310.500h31M199 414.500h31M210.500 311v103" />
        <path d="m210.500 311 2 10h-4zM210.500 414l2-10h-4z" fill="#59666a" strokeWidth=".5" />
      </g>
      <text
        x="199"
        y="362"
        transform="rotate(-90 199 362)"
        textAnchor="middle"
        dominantBaseline="central"
        className="fill-[#7c878a] text-[11px] font-light"
      >
        600
      </text>

      {/* constraint marks */}
      <g stroke="#6f7480" strokeWidth="1.5">
        <path d="M884 295.500h12M884 300.500h12M884 399.500h12M884 404.500h12" />
        <path d="m899 318 8-16M903 318l8-16M899 422l8-16M903 422l8-16" />
      </g>
      <path d="M881 414.500h18" stroke="#3340b8" strokeWidth="4" />

      {/* sketch coordinate system */}
      <rect x="774" y="147" width="84" height="84" fill="#cae7f3" stroke="#3d87b0" strokeWidth="2" rx="1" />
      <path d="M816 121.500h67.500V185" stroke="#20204c" />
      <path d="M816.500 107V70" stroke="#9a9ab8" />
      <path d="m816.500 56 3.500 15h-7z" fill="#12128a" />
      <path d="M898 189h36" stroke="#9a9ab8" />
      <path d="m949 189-15 3.500v-7z" fill="#12128a" />
      <path d="M810 189.500h12M816.500 184v12M812 185l9 9M821 185l-9 9" stroke="#1f3f78" />
      <path d="M816.500 188V126" stroke="#3b8c3b" strokeWidth="4" />
      <path d="m816.500 107 5 20h-10z" fill="#3b8c3b" />
      <path d="M818 189h62" stroke="#b8413f" strokeWidth="4" />
      <path d="m898 189-19 5v-10z" fill="#c04341" />
      <g textAnchor="middle" dominantBaseline="central" className="text-[13px]">
        <text x="816" y="48" fill="#333a48">Y</text>
        <text x="816" y="97" fill="#5c6c5c">Y</text>
        <text x="906" y="188" fill="#6a4c4c">X</text>
        <text x="956" y="188" fill="#25253c">X</text>
      </g>
    </svg>
  );
}

function ViewTriad() {
  return (
    <svg viewBox="0 0 120 120" className="absolute bottom-[84px] left-[80px] h-[120px] w-[120px]" aria-hidden="true">
      <path d="M27 72V38" stroke="#3b8c3b" strokeWidth="3" />
      <path d="m27 18 5 20H22z" fill="#3b8c3b" />
      <path d="M48 92.500h34" stroke="#b8413f" strokeWidth="3" />
      <path d="m99 92.500-19 5v-10z" fill="#c04341" />
      <rect x="5.5" y="71.5" width="42" height="42" fill="#fff" stroke="#bcc2c2" />
      <circle cx="27" cy="92.5" r="5" fill="#173a9c" />
      <g textAnchor="middle" dominantBaseline="central" className="fill-[#777] text-[11px]">
        <text x="27" y="8">Y</text>
        <text x="109" y="92">X</text>
      </g>
    </svg>
  );
}

function SpeedGauge() {
  return (
    <div className="absolute top-[614px] right-[24px] flex h-20 w-20 flex-col items-center justify-center text-[#333]">
      <svg viewBox="0 0 80 80" className="absolute inset-0" fill="none" aria-hidden="true">
        <circle cx="40" cy="40" r="34" fill="#f2fdf6" />
        <circle cx="40" cy="40" r="28.5" fill="#e6fcee" stroke="#74a98c" strokeWidth="1.3" />
        <circle cx="40" cy="40" r="22" fill="#f3fef7" />
        <path d="M40 9a31 31 0 0 1 30.600 36" stroke="#55c97c" strokeWidth="4" />
      </svg>
      <div className="relative flex items-baseline">
        <span className="text-[23px] leading-6 font-light">28</span>
        <span className="text-xs">%</span>
      </div>
      <div className="relative mt-1 flex items-center gap-1.5 pr-1.5 text-[9px] leading-3">
        <Icon box="0 0 6 8" className="w-1.5 h-2 text-[#3f9c68]">
          <path d="M3 0v7M.5 4.500 3 7.500l2.500-3" strokeWidth="1.2" />
        </Icon>
        0K/s
      </div>
    </div>
  );
}

function GraphicsWindow() {
  return (
    <main className="flex min-w-0 flex-1 flex-col bg-white">
      <div className="flex h-[26px] items-end border-b-2 border-[#235d6e]">
        <div className="flex h-[25px] w-[170px] items-center gap-1.5 bg-[#08597a] pl-1.5 text-xs whitespace-nowrap text-[#c8f0f4]">
          <Bracket className="w-[14px] h-[14px]" />
          <span>CNC编程杨工-7.prt</span>
          <Icon className="ml-px w-[11px] h-[11px]" box="0 0 11 11">
            <path d="M6 1H1v9h7V8M6 1l3 2v2M5 5h4l1 2-4 2" strokeWidth="1.5" />
          </Icon>
          <button type="button" aria-label="关闭标签" className="ml-px">
            <Icon className="w-2 h-2 text-[#9cc6d2]" box="0 0 8 8">
              <path d="m0 0 8 8M8 0 0 8" strokeWidth="1.8" />
            </Icon>
          </button>
        </div>
      </div>
      <div className="relative flex-1 overflow-hidden">
        <SketchCurves />
        {/* on-screen offset input */}
        <div className="absolute top-[354px] left-[378px] flex h-[31px] w-[108px] items-center justify-between border border-[#a9aeae] bg-[#f0f2f1] px-[3px] text-xs text-[#222]">
          <Icon box="0 0 6 24" className="w-1.5 h-6 text-[#a0a6a6]">
            <path d="M1 1v22M5 1v22" strokeWidth="2" strokeDasharray="2 2" />
          </Icon>
          <label htmlFor="offset" className="ml-auto pr-0.5">
            偏置
          </label>
          <input
            id="offset"
            defaultValue="-600"
            className="h-[23px] w-[58px] border border-[#6a7070] bg-white pl-[5px] text-xs text-[#222] outline-none"
          />
          <span className="absolute top-1.5 right-[54px] h-[17px] w-px bg-black" />
        </div>
        <ViewTriad />
        <SpeedGauge />
      </div>
    </main>
  );
}

export default function App() {
  return (
    <div className="flex min-h-screen flex-col bg-white font-['Open_Sans','Noto_Sans_CJK_SC',sans-serif]">
      <TitleBar />
      <Ribbon />
      <SelectionBar />
      <div className="flex flex-1">
        <ResourceBar />
        <PartNavigator />
        <GraphicsWindow />
      </div>
      <footer className="flex h-6 items-center border-t border-b-2 border-t-[#b4b9b7] border-b-[#3a3a3a] pl-[3px] text-[11px] font-medium text-[#111]">
        选择第二条参考线或指定平行线
      </footer>
    </div>
  );
}
